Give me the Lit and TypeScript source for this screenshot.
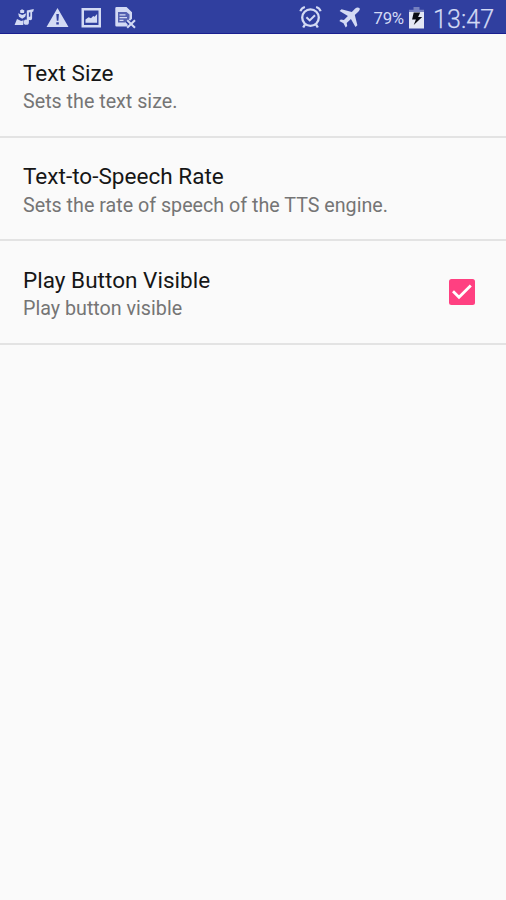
import { LitElement, html, css, svg, nothing } from "lit";
import { customElement, property, state } from "lit/decorators.js";

@customElement("status-bar")
class StatusBar extends LitElement {
  static styles = css`
    :host {
      display: flex;
      align-items: flex-start;
      justify-content: space-between;
      box-sizing: border-box;
      height: 34px;
      background: #303f9f;
      border-bottom: 1px solid #1a1f90;
      color: #d3daf4;
    }
    .icons { display: block; width: 145px; height: 33px; }
    .right { display: flex; height: 33px; }
    .signals { display: block; width: 78px; height: 33px; }
    .battery { display: block; width: 20px; height: 33px; }
    .percent { width: 33px; font-size: 16.8px; line-height: 37px; letter-spacing: -0.3px; white-space: nowrap; text-indent: -0.5px; }
    .clock { width: 79px; padding-left: 6px; box-sizing: border-box; font-size: 25px; font-weight: 300; line-height: 39px; letter-spacing: 0.1px; white-space: nowrap; -webkit-text-stroke: 0.25px #d3daf4; }
  `;

  render() {
    return html`
      <svg class="icons" viewBox="0 0 145 33" fill="currentColor">
        ${svg`
          <path d="M20 10.6l2-1.4 2.4 1.4-.4 2.4h-3.6z"/>
          <path d="M18.2 13.2l4 1.8 4-1.8-1 3.6-3 2-3.2-2z"/>
          <path d="M17 19l4.2 2 2.4-.8-.4 4.8H14.6z"/>
          <path d="M26.8 10.4l7-1.4-.5 2.6-1.2.3v6.3a1.9 1.9 0 1 1-1.8-1.8v-4.1l-1.4.3v9.6a2.6 2.6 0 1 1-2.1-2.5z"/>
          <path fill-rule="evenodd" d="M57.5 8L68.5 27h-22zM56.3 14l.5 6.7h1.6l.5-6.7zM56.3 22.3v2.3h2.5v-2.3z"/>
          <path fill-rule="evenodd" d="M81.5 8h19.5v19.5h-19.5zM84 10.5v14.5h14.5v-14.5z"/>
          <path d="M85.5 22.8v-3.4l3.1-2.2 2.4 1 2.2-2.3 1.4.8 2.5-2.8v8.9z"/>
          <path d="M116.5 7h10l5.5 5.2v6.5l-2 2-2-2-3 3 2.6 2.6v2.2h-11.1a1.2 1.2 0 0 1-1.2-1.2V8.2a1.2 1.2 0 0 1 1.2-1.2z"/>
          <path fill="#5461b1" d="M118 12h8.5l3 2.5v4l-4.5 4h-7z"/>
          <path d="M119.5 14.2h6v1.2h-6zM119.5 17h7.5v1.2h-7.5zM119.5 19.8h4v1.2h-4z"/>
          <path d="M127.2 20.2l7.8 7.6M135 20.2l-7.8 7.6" stroke="currentColor" stroke-width="2" fill="none"/>
        `}
      </svg>
      <div class="right">
        <svg class="signals" viewBox="296 0 78 33" fill="none" stroke="currentColor">
          ${svg`
            <circle cx="310.5" cy="17.6" r="8.3" stroke-width="2.3"/>
            <path d="M306.4 17.2l3.3 3.2 5.3-5.2" stroke-width="2"/>
            <path d="M300.4 11.2q1-3.3 4.5-4.2M320.6 11.2q-1-3.3-4.5-4.2" stroke-width="2.2"/>
            <path d="M305 24.5l-1.8 3M316 24.5l1.8 3" stroke-width="2.4"/>
            <path fill="currentColor" stroke="none" d="M359.4 8.1c-1.2-1.2-3-.7-4.2.5l-3.4 3.3-10.3-2.7-1.9 1.9 8.3 4.8-4 4.2-3.1-.5-1.5 1.5 4.2 2.2 2.2 4.2 1.5-1.5-.5-3.1 4.2-4 4.6 8.2 1.9-1.9-2.6-10.1 3.5-3.3c1.2-1.1 2.1-2.6 1.1-3.7z"/>
          `}
        </svg>
        <span class="percent">79%</span>
        <svg class="battery" viewBox="407 0 20 33">
          ${svg`
            <path fill="#7580bf" d="M413.5 7h6v2.8h4.5v3h-15v-3h4.5z"/>
            <path fill="#e4e8f5" d="M409 12h15v16.5h-15z"/>
            <path fill="#080b12" d="M413.7 12.6h6.5l-2.1 4.3h4.1l-8.5 8.2 2.2-5.7h-3.8z"/>
          `}
        </svg>
        <span class="clock">13:47</span>
      </div>
    `;
  }
}

@customElement("preference-row")
class PreferenceRow extends LitElement {
  @property() heading = "";
  @property() summary = "";
  @property({ attribute: false }) checked?: boolean;

  static styles = css`
    :host {
      display: flex;
      justify-content: space-between;
      align-items: center;
      box-sizing: border-box;
      height: 103.5px;
      padding: 0 31px 0 23px;
      border-bottom: 2px solid #e3e3e3;
    }
    .text { padding-top: 5px; }
    .title { color: #161616; font-size: 22.5px; line-height: 29.5px; letter-spacing: 0.03px; }
    .summary { color: #757575; font-size: 19.7px; line-height: 27.5px; letter-spacing: 0; }
    .title, .summary { white-space: nowrap; }
    .check { display: block; width: 26px; height: 26px; }
  `;

  render() {
    return html`
      <div class="text">
        <div class="title">${this.heading}</div>
        <div class="summary">${this.summary}</div>
      </div>
      ${this.checked === undefined
        ? nothing
        : html`<svg class="check" viewBox="0 0 26 26" role="checkbox" aria-checked=${this.checked}
            @click=${() => this.dispatchEvent(new CustomEvent("toggle"))}>
            ${this.checked
              ? svg`<rect width="26" height="26" rx="2.5" fill="#ff4081"/>
                  <path d="M4 12.3l6 6L21.8 6.4" fill="none" stroke="#fff" stroke-width="2.8"/>`
              : svg`<rect x="1.5" y="1.5" width="23" height="23" rx="2" fill="none" stroke="#757575" stroke-width="3"/>`}
          </svg>`}
    `;
  }
}

@customElement("app-root")
class AppRoot extends LitElement {
  @state() private playVisible = true;

  static styles = css`
    :host {
      display: flex;
      flex-direction: column;
      height: 100vh;
      overflow: hidden;
      background: #fafafa;
      font-family: Roboto, "Noto Sans", sans-serif;
    }
    status-bar, preference-row { flex: none; }
  `;

  render() {
    return html`
      <status-bar></status-bar>
      <preference-row heading="Text Size" summary="Sets the text size."></preference-row>
      <preference-row heading="Text-to-Speech Rate" summary="Sets the rate of speech of the TTS engine."></preference-row>
      <preference-row heading="Play Button Visible" summary="Play button visible"
        .checked=${this.playVisible} @toggle=${() => (this.playVisible = !this.playVisible)}></preference-row>
    `;
  }
}
